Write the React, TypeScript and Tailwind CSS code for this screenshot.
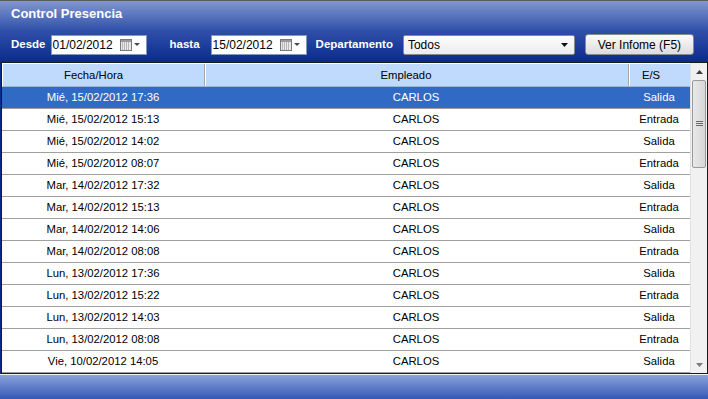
import React from 'react'

type Registro = { fecha: string; tipo: 'Entrada' | 'Salida' }

const registros: Registro[] = [
    { fecha: 'Mié, 15/02/2012 17:36', tipo: 'Salida' },
    { fecha: 'Mié, 15/02/2012 15:13', tipo: 'Entrada' },
    { fecha: 'Mié, 15/02/2012 14:02', tipo: 'Salida' },
    { fecha: 'Mié, 15/02/2012 08:07', tipo: 'Entrada' },
    { fecha: 'Mar, 14/02/2012 17:32', tipo: 'Salida' },
    { fecha: 'Mar, 14/02/2012 15:13', tipo: 'Entrada' },
    { fecha: 'Mar, 14/02/2012 14:06', tipo: 'Salida' },
    { fecha: 'Mar, 14/02/2012 08:08', tipo: 'Entrada' },
    { fecha: 'Lun, 13/02/2012 17:36', tipo: 'Salida' },
    { fecha: 'Lun, 13/02/2012 15:22', tipo: 'Entrada' },
    { fecha: 'Lun, 13/02/2012 14:03', tipo: 'Salida' },
    { fecha: 'Lun, 13/02/2012 08:08', tipo: 'Entrada' },
    { fecha: 'Vie, 10/02/2012 14:05', tipo: 'Salida' },
]

function CalendarIcon() {
    return (
        <svg width="21" height="12" viewBox="0 0 21 12">
            <rect x="0.5" y="0.5" width="11" height="11" fill="#e8e8e8" stroke="#7a7a7a" />
            <rect x="1" y="1" width="10" height="2" fill="#9a9a9a" />
            {[3, 5, 7, 9].map((y) =>
                [2, 4, 6, 8].map((x) => (
                    <rect key={`${x}-${y}`} x={x} y={y + 0.5} width="1" height="1" fill="#8a8a8a" />
                ))
            )}
            <path d="M14 4 L20 4 L17 7 Z" fill="#4a4a4a" />
        </svg>
    )
}

function DatePicker({ value, className }: { value: string; className: string }) {
    return (
        <div className={`h-[20px] w-[96px] bg-white border border-[#7f9db9] flex items-center pl-[1px] pr-[5px] ${className}`}>
            <span className="text-[12px] text-black flex-1 leading-none">{value}</span>
            <CalendarIcon />
        </div>
    )
}

function ScrollBar() {
    return (
        <div className="w-[17px] bg-[#f1f1f1] flex flex-col border-l border-[#e2e2e2]">
            <div className="h-[17px] flex items-center justify-center bg-[#f1f1f1]">
                <svg width="7" height="4" viewBox="0 0 7 4">
                    <path d="M0 4 L3.5 0 L7 4 Z" fill="#3c3c3c" />
                </svg>
            </div>
            <div className="mx-[1px] h-[88px] rounded-[2px] border border-[#9a9a9a] bg-gradient-to-r from-[#e9e9e9] to-[#d6d6d6] flex items-center justify-center">
                <svg width="7" height="6" viewBox="0 0 7 6">
                    <rect x="0" y="0" width="7" height="1" fill="#6a6a6a" />
                    <rect x="0" y="2" width="7" height="1" fill="#6a6a6a" />
                    <rect x="0" y="4" width="7" height="1" fill="#6a6a6a" />
                </svg>
            </div>
            <div className="flex-1" />
            <div className="h-[17px] flex items-center justify-center">
                <svg width="7" height="4" viewBox="0 0 7 4">
                    <path d="M0 0 L7 0 L3.5 4 Z" fill="#7a7a7a" />
                </svg>
            </div>
        </div>
    )
}

export default function App() {
    return (
        <div className="w-[708px] h-[399px] flex flex-col bg-[#f4f4f4] overflow-hidden font-['Liberation_Sans',Arial,sans-serif]">
            {/* Cabecera */}
            <div className="h-[62px] bg-gradient-to-b from-[#8397d0] via-[#2e4ea8] to-[#0b2a8c] border-t border-[#5c5c5c]">
                <div className="pl-[11px] pt-[5px] text-[13px] font-bold text-white leading-[16px]">
                    Control Presencia
                </div>
                <div className="flex items-center mt-[12px] h-[21px]">
                    <span className="ml-[11px] text-[11.5px] font-bold text-white">Desde</span>
                    <DatePicker value="01/02/2012" className="ml-[5px]" />
                    <span className="ml-[23px] text-[11.5px] font-bold text-white">hasta</span>
                    <DatePicker value="15/02/2012" className="ml-[11px]" />
                    <span className="ml-[9px] text-[11.5px] font-bold text-white">Departamento</span>
                    <div className="ml-[10px] h-[20px] w-[172px] bg-gradient-to-b from-[#fdfdfd] to-[#ececec] border border-[#8a8a8a] rounded-[2px] flex items-center pl-[4px] pr-[6px]">
                        <span className="flex-1 text-[12px] text-black leading-none">Todos</span>
                        <svg width="7" height="4" viewBox="0 0 7 4">
                            <path d="M0 0 L7 0 L3.5 4 Z" fill="#111" />
                        </svg>
                    </div>
                    <button className="ml-[10px] h-[21px] w-[109px] bg-gradient-to-b from-[#fbfbfb] to-[#dcdcdc] border border-[#8a8a8a] rounded-[3px] text-[12px] text-black leading-none">
                        Ver Infome (F5)
                    </button>
                </div>
            </div>

            {/* Tabla */}
            <div className="flex bg-[#0b2a8c]">
                <div className="ml-[1px] flex-1 border border-[#1a1a1a] bg-white flex h-[312px]">
                    <div className="flex-1 flex flex-col">
                        <div className="grid grid-cols-[202px_424px_1fr] h-[24px] bg-[#bfdafc] border-t border-l border-white border-b border-b-[#9cb4d6] text-[11.3px] text-black">
                            <div className="flex items-center justify-center pr-[20px] border-r border-[#a8a8a8]">Fecha/Hora</div>
                            <div className="flex items-center justify-center pr-[22px] border-r border-[#a8a8a8] border-l border-l-white">Empleado</div>
                            <div className="flex items-center justify-center pr-[18px] border-l border-white">E/S</div>
                        </div>
                        {registros.map((r, i) => {
                            const sel = i === 0
                            return (
                                <div
                                    key={i}
                                    className={`grid grid-cols-[202px_424px_1fr] h-[22px] border-b border-[#a0a0a0] text-[11.3px] items-center ${
                                        sel ? 'bg-[#316ac5] text-white' : 'bg-white text-black'
                                    }`}
                                >
                                    <div className="text-center">{r.fecha}</div>
                                    <div className="text-center">CARLOS</div>
                                    <div className="text-center">{r.tipo}</div>
                                </div>
                            )
                        })}
                    </div>
                    <ScrollBar />
                </div>
            </div>

            {/* Pie */}
            <div className="mt-[1px] flex-1 bg-gradient-to-b from-[#8aa2da] to-[#3658b6]" />
        </div>
    )
}
